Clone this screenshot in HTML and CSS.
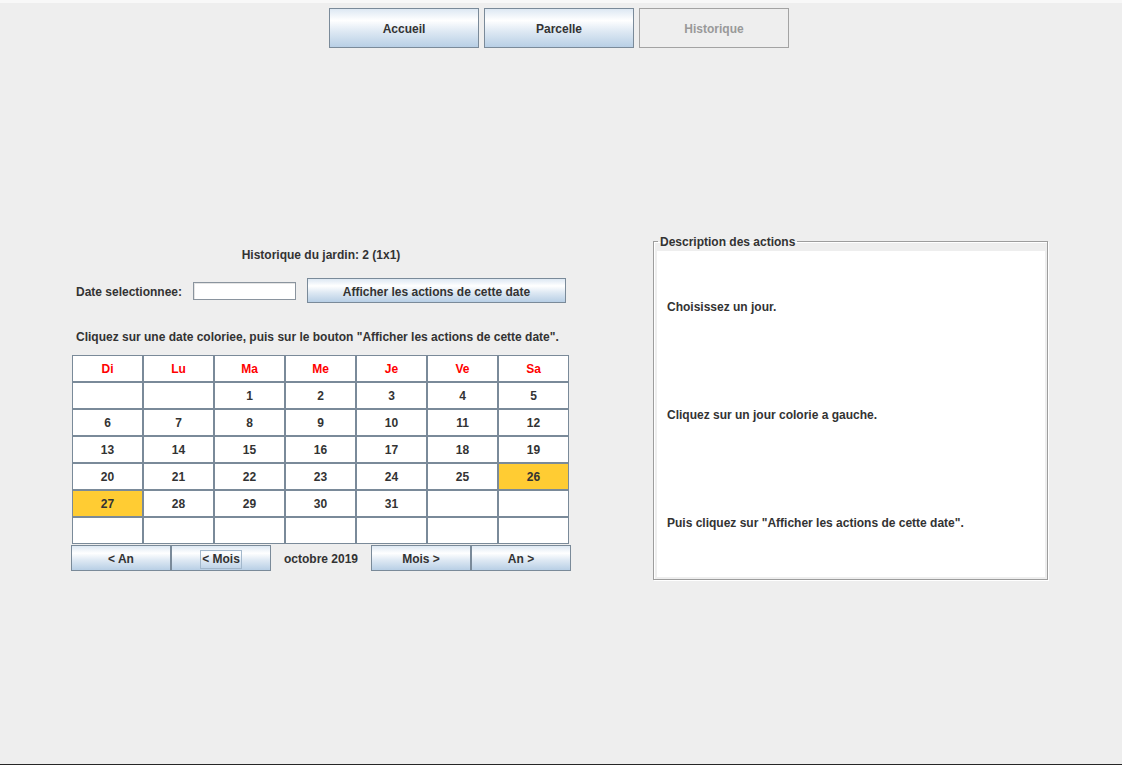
FILE: index.html
```html
<!DOCTYPE html>
<html lang="fr">
<head>
<meta charset="utf-8">
<title>Historique</title>
<link rel="stylesheet" href="styles.css">
</head>
<body>
<div class="window">
  <nav class="tabs">
    <button class="btn tab">Accueil</button>
    <button class="btn tab">Parcelle</button>
    <button class="btn tab disabled">Historique</button>
  </nav>
  <main class="content">
    <section class="left">
      <div class="title">Historique du jardin: 2 (1x1)</div>
      <div class="date-row">
        <span class="date-label">Date selectionnee:</span>
        <span class="date-field"></span>
        <button class="btn show-btn">Afficher les actions de cette date</button>
      </div>
      <div class="hint">Cliquez sur une date coloriee, puis sur le bouton "Afficher les actions de cette date".</div>
      <div class="calendar">
        <div class="cell head">Di</div><div class="cell head">Lu</div><div class="cell head">Ma</div><div class="cell head">Me</div><div class="cell head">Je</div><div class="cell head">Ve</div><div class="cell head">Sa</div>
        <div class="cell"></div><div class="cell"></div><div class="cell">1</div><div class="cell">2</div><div class="cell">3</div><div class="cell">4</div><div class="cell">5</div>
        <div class="cell">6</div><div class="cell">7</div><div class="cell">8</div><div class="cell">9</div><div class="cell">10</div><div class="cell">11</div><div class="cell">12</div>
        <div class="cell">13</div><div class="cell">14</div><div class="cell">15</div><div class="cell">16</div><div class="cell">17</div><div class="cell">18</div><div class="cell">19</div>
        <div class="cell">20</div><div class="cell">21</div><div class="cell">22</div><div class="cell">23</div><div class="cell">24</div><div class="cell">25</div><div class="cell marked">26</div>
        <div class="cell marked">27</div><div class="cell">28</div><div class="cell">29</div><div class="cell">30</div><div class="cell">31</div><div class="cell"></div><div class="cell"></div>
        <div class="cell"></div><div class="cell"></div><div class="cell"></div><div class="cell"></div><div class="cell"></div><div class="cell"></div><div class="cell"></div>
      </div>
      <div class="nav">
        <button class="btn navbtn">&lt; An</button>
        <button class="btn navbtn"><span class="focus">&lt; Mois</span></button>
        <div class="month">octobre 2019</div>
        <button class="btn navbtn">Mois &gt;</button>
        <button class="btn navbtn">An &gt;</button>
      </div>
    </section>
    <fieldset class="desc">
      <legend>Description des actions</legend>
      <div class="desc-body">
        <p>Choisissez un jour.</p>
        <p>Cliquez sur un jour colorie a gauche.</p>
        <p>Puis cliquez sur "Afficher les actions de cette date".</p>
      </div>
    </fieldset>
  </main>
</div>
</body>
</html>
```
FILE: styles.css
```css
* { box-sizing: border-box; }

body {
  margin: 0;
  background: #eeeeee;
  font: bold 12px "Liberation Sans", Arial, sans-serif;
  color: #333333;
}

.window {
  width: 1122px;
  height: 765px;
  border-top: 3px solid #f8f8f8;
  border-bottom: 1px solid #262626;
  overflow: hidden;
}

.btn {
  margin: 0;
  padding: 2px 0 0;
  border: 1px solid #7a8a99;
  background: linear-gradient(to bottom, #dde8f3 0%, #ffffff 30%, #dde8f3 60%, #b8cfe5 100%);
  font: inherit;
  color: #333333;
  display: flex;
  align-items: center;
  justify-content: center;
}

.tabs {
  width: 1118px;
  display: flex;
  justify-content: center;
  gap: 5px;
  padding-top: 5px;
}

.tab {
  width: 150px;
  height: 40px;
}

.tab.disabled {
  background: #eeeeee;
  border-color: #a3a3a3;
  color: #999999;
}

.content {
  display: flex;
  align-items: flex-start;
  gap: 82px;
  padding-left: 71px;
  margin-top: 186px;
}

.left {
  width: 500px;
  padding-top: 14px;
}

.title {
  text-align: center;
  line-height: 15px;
}

.date-row {
  display: flex;
  align-items: center;
  height: 25px;
  margin-top: 15px;
}

.date-label {
  width: 122px;
  padding-left: 5px;
  padding-top: 3px;
}

.date-field {
  width: 103px;
  height: 18px;
  border: 1px solid #8a949e;
  background: #ffffff;
  box-shadow: inset 1px 1px 0 #e4e4e4;
}

.show-btn {
  width: 259px;
  height: 25px;
  margin-left: 11px;
}

.hint {
  margin-top: 27px;
  padding-left: 5px;
  line-height: 15px;
}

.calendar {
  margin-top: 10px;
  margin-left: 1px;
  display: grid;
  grid-template-columns: repeat(7, 71px);
  grid-auto-rows: 27px;
}

.cell {
  border: 1px solid #7a8a99;
  background: #ffffff;
  display: flex;
  align-items: center;
  justify-content: center;
}

.cell.head { color: #ff0000; }
.cell.marked { background: #ffcc33; }

.nav {
  display: grid;
  grid-template-columns: repeat(5, 100px);
  height: 26px;
  margin-top: 1px;
}

.navbtn { height: 26px; }

.focus {
  border: 1px solid #a3b8cc;
  padding: 1px 1px 2px;
  line-height: 14px;
}

.month {
  display: flex;
  align-items: center;
  justify-content: center;
  padding-top: 2px;
}

.desc {
  margin: 0;
  padding: 0;
  min-width: 0;
  border: 1px solid #9d9d9d;
  box-shadow: inset 1px 1px 0 #ffffff, 1px 1px 0 #ffffff;
}

.desc legend {
  margin-left: 4px;
  padding: 1px 2px 0;
  line-height: 14px;
}

.desc-body {
  width: 388px;
  height: 326px;
  margin: 2px 2px 2px 3px;
  background: #ffffff;
  padding: 49px 10px 0;
}

.desc-body p {
  margin: 0 0 93px;
  line-height: 15px;
}
```
